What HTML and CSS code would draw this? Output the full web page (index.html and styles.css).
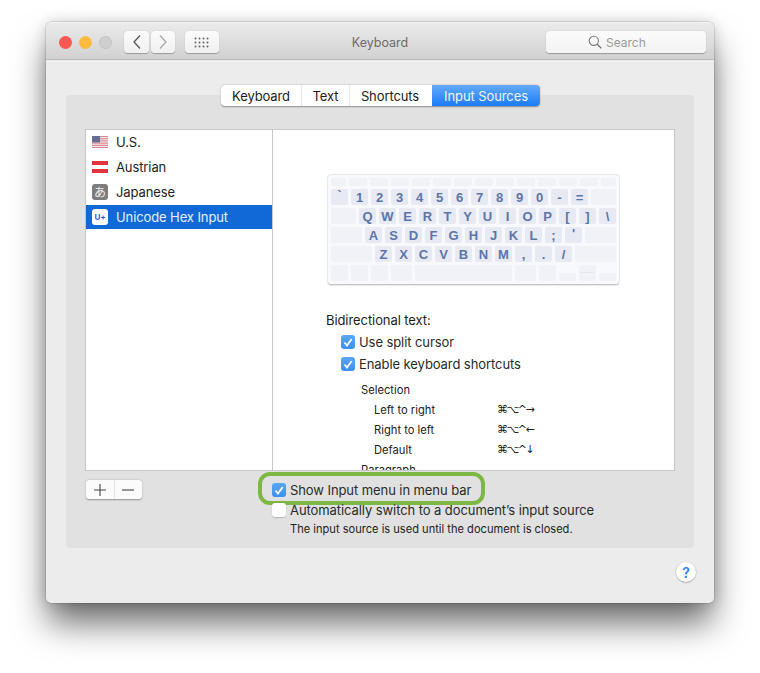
FILE: index.html
```html
<!DOCTYPE html>
<html lang="en">
<head>
<meta charset="utf-8">
<title>Keyboard</title>
<link rel="stylesheet" href="styles.css">
</head>
<body>
<div class="window">
  <header class="titlebar">
    <div class="tb-left">
      <div class="lights"><span class="light red"></span><span class="light yellow"></span><span class="light grey"></span></div>
      <div class="nav">
        <span class="tb-btn nav-back"><svg width="10" height="16" viewBox="0 0 10 16"><path d="M8 1.500 2 8l6 6.500" fill="none" stroke="#555" stroke-width="1.300"/></svg></span>
        <span class="tb-btn nav-fwd"><svg width="10" height="16" viewBox="0 0 10 16"><path d="M2 1.500 8 8l-6 6.500" fill="none" stroke="#aaa" stroke-width="1.300"/></svg></span>
      </div>
      <span class="tb-btn grid-btn"><svg width="16" height="11" viewBox="0 0 16 11" fill="#666"><circle cx="1.500" cy="1.500" r="1"/><circle cx="5.500" cy="1.500" r="1"/><circle cx="9.500" cy="1.500" r="1"/><circle cx="13.500" cy="1.500" r="1"/><circle cx="1.500" cy="5.500" r="1"/><circle cx="5.500" cy="5.500" r="1"/><circle cx="9.500" cy="5.500" r="1"/><circle cx="13.500" cy="5.500" r="1"/><circle cx="1.500" cy="9.500" r="1"/><circle cx="5.500" cy="9.500" r="1"/><circle cx="9.500" cy="9.500" r="1"/><circle cx="13.500" cy="9.500" r="1"/></svg></span>
    </div>
    <div class="title">Keyboard</div>
    <div class="tb-right">
      <div class="search"><svg width="14" height="14" viewBox="0 0 14 14"><circle cx="5.800" cy="5.800" r="4.600" fill="none" stroke="#777" stroke-width="1.100"/><path d="m9.200 9.200 4 4" stroke="#777" stroke-width="1.300"/></svg><span>Search</span></div>
    </div>
  </header>

  <main class="content">
    <nav class="tabs">
      <span class="tab tab-keyboard">Keyboard</span>
      <span class="tab tab-text">Text</span>
      <span class="tab tab-shortcuts">Shortcuts</span>
      <span class="tab tab-input">Input Sources</span>
    </nav>

    <section class="panel">
      <div class="box">
        <ul class="sources">
          <li class="source">
            <svg class="src-icon" width="16" height="12" viewBox="0 0 16 12"><rect width="16" height="12" fill="#f3f1f3"/><path d="M0 .5h16M0 2.400h16M0 4.200h16M0 6h16M0 7.800h16M0 9.600h16M0 11.500h16" stroke="#d98088" stroke-width=".95"/><rect width="8" height="6.500" fill="#666e94"/></svg>
            <span>U.S.</span>
          </li>
          <li class="source">
            <svg class="src-icon" width="16" height="12" viewBox="0 0 16 12"><rect width="16" height="12" fill="#fff"/><rect width="16" height="4" fill="#e2343f"/><rect y="8" width="16" height="4" fill="#e2343f"/></svg>
            <span>Austrian</span>
          </li>
          <li class="source">
            <span class="src-badge badge-ja">あ</span>
            <span>Japanese</span>
          </li>
          <li class="source selected">
            <span class="src-badge badge-hex">U+</span>
            <span>Unicode Hex Input</span>
          </li>
        </ul>
        <div class="detail">
          <div class="kbd">
            <div class="kr kr-fn"><i class="b w15"></i><i class="b w18"></i><i class="b w18"></i><i class="b w18"></i><i class="b w18"></i><i class="b w18"></i><i class="b w18"></i><i class="b w18"></i><i class="b w18"></i><i class="b w18"></i><i class="b w18"></i><i class="b w18"></i><i class="b w18"></i><i class="b w15"></i></div>
            <div class="kr"><b class="k top">`</b><b class="k">1</b><b class="k">2</b><b class="k">3</b><b class="k">4</b><b class="k">5</b><b class="k">6</b><b class="k">7</b><b class="k">8</b><b class="k">9</b><b class="k">0</b><b class="k">-</b><b class="k">=</b><i class="b w25"></i></div>
            <div class="kr"><i class="b w25"></i><b class="k">Q</b><b class="k">W</b><b class="k">E</b><b class="k">R</b><b class="k">T</b><b class="k">Y</b><b class="k">U</b><b class="k">I</b><b class="k">O</b><b class="k">P</b><b class="k">[</b><b class="k">]</b><b class="k">\</b></div>
            <div class="kr"><i class="b w31"></i><b class="k">A</b><b class="k">S</b><b class="k">D</b><b class="k">F</b><b class="k">G</b><b class="k">H</b><b class="k">J</b><b class="k">K</b><b class="k">L</b><b class="k">;</b><b class="k top">'</b><i class="b grow"></i></div>
            <div class="kr"><i class="b w41"></i><b class="k">Z</b><b class="k">X</b><b class="k">C</b><b class="k">V</b><b class="k">B</b><b class="k">N</b><b class="k">M</b><b class="k">,</b><b class="k">.</b><b class="k">/</b><i class="b grow"></i></div>
            <div class="kr"><i class="b w17"></i><i class="b w17"></i><i class="b w17"></i><i class="b w21"></i><i class="b w97"></i><i class="b w21"></i><i class="b w17"></i><i class="b w17 half-low"></i><span class="updown"><i class="b half"></i><i class="b half"></i></span><i class="b w17 half-low"></i></div>
          </div>

          <h2 class="bidi-title">Bidirectional text:</h2>
          <div class="check-row">
            <span class="cb on"><svg width="10" height="9" viewBox="0 0 10 9"><path d="M1.500 4.500 4 7.500 8.700 1" fill="none" stroke="#fff" stroke-width="1.800"/></svg></span>
            <span>Use split cursor</span>
          </div>
          <div class="check-row">
            <span class="cb on"><svg width="10" height="9" viewBox="0 0 10 9"><path d="M1.500 4.500 4 7.500 8.700 1" fill="none" stroke="#fff" stroke-width="1.800"/></svg></span>
            <span>Enable keyboard shortcuts</span>
          </div>
          <div class="sc-head">Selection</div>
          <div class="sc-row"><span>Left to right</span><span class="sc-keys">⌘⌥^→</span></div>
          <div class="sc-row"><span>Right to left</span><span class="sc-keys">⌘⌥^←</span></div>
          <div class="sc-row"><span>Default</span><span class="sc-keys">⌘⌥^↓</span></div>
          <div class="sc-head sc-para">Paragraph</div>
        </div>
      </div>

      <div class="under">
        <div class="plusminus">
          <span class="pm pm-plus"><svg width="12" height="12" viewBox="0 0 12 12"><path d="M6 0v12M0 6h12" stroke="#444" stroke-width="1.100"/></svg></span>
          <span class="pm"><svg width="12" height="12" viewBox="0 0 12 12"><path d="M0 6h12" stroke="#444" stroke-width="1.100"/></svg></span>
        </div>
        <div class="options">
          <div class="opt-row">
            <span class="cb on"><svg width="10" height="9" viewBox="0 0 10 9"><path d="M1.500 4.500 4 7.500 8.700 1" fill="none" stroke="#fff" stroke-width="1.800"/></svg></span>
            <span>Show Input menu in menu bar</span>
            <span class="ring"></span>
          </div>
          <div class="opt-row">
            <span class="cb off"></span>
            <span>Automatically switch to a document’s input source</span>
          </div>
          <p class="opt-note">The input source is used until the document is closed.</p>
        </div>
      </div>
    </section>

    <div class="help-row"><span class="help">?</span></div>
  </main>
</div>
</body>
</html>
```
FILE: styles.css
```css
* { box-sizing: border-box; }
html, body { margin: 0; height: 100%; background: #fff; }
body {
  padding: 22px 46px 0;
  font-family: Inter, "Liberation Sans", sans-serif;
  color: #222;
  overflow: hidden;
}
.window {
  width: 668px;
  height: 581px;
  border-radius: 5px;
  background: #ececec;
  box-shadow: 0 22px 34px -2px rgba(0, 0, 0, .58), 0 0 14px rgba(0, 0, 0, .16), 0 0 0 .5px rgba(0, 0, 0, .2);
  overflow: hidden;
  display: flex;
  flex-direction: column;
}
.titlebar {
  height: 38px;
  padding: 8px;
  display: grid;
  grid-template-columns: 1fr auto 1fr;
  align-items: center;
  background: linear-gradient(#ebebeb, #d1d1d1);
  border-bottom: 1px solid #bababa;
  border-top: 1px solid #f3f3f3;
}
.tb-left { display: flex; align-items: center; padding-left: 5px; }
.lights { display: flex; gap: 7px; margin-right: 12px; }
.light { width: 13px; height: 13px; border-radius: 50%; }
.red { background: #fc5753; }
.yellow { background: #fdbc40; }
.grey { background: #cfcfcf; border: 1px solid #c2c2c2; }
.nav { display: flex; gap: 2px; margin-right: 10px; }
.tb-btn {
  height: 22px;
  display: flex;
  align-items: center;
  justify-content: center;
  background: linear-gradient(#fbfbfb, #f0f0f0);
  border-radius: 4px;
  box-shadow: 0 .5px 1px rgba(0, 0, 0, .28);
}
.nav-back { width: 25px; }
.nav-fwd { width: 24px; }
.grid-btn { width: 34px; }
.title { font-size: 12.500px; color: #6c6c6c; }
.tb-right { display: flex; justify-content: flex-end; }
.search {
  width: 160px;
  height: 22px;
  display: flex;
  align-items: center;
  gap: 4px;
  padding-left: 42px;
  background: linear-gradient(#fbfbfb, #f3f3f3);
  border-radius: 4px;
  box-shadow: 0 .5px 1px rgba(0, 0, 0, .28);
  font-size: 12px;
  color: #9a9a9a;
}

.content { flex: 1; padding: 25px 20px 0; display: flex; flex-direction: column; }
.tabs {
  position: relative;
  z-index: 1;
  align-self: center;
  display: flex;
  height: 21px;
  margin-bottom: -11px;
  margin-left: 1px;
  border-radius: 4px;
  background: #fff;
  box-shadow: 0 .5px 1.500px rgba(0, 0, 0, .38);
  font-size: 13px;
  letter-spacing: -.1px;
  color: #1c1c1c;
}
.tab {
  display: flex;
  align-items: center;
  justify-content: center;
  border-right: 1px solid #e6e6e6;
}
.tab-keyboard { width: 81px; }
.tab-text { width: 48px; }
.tab-shortcuts { width: 82px; border-right: 0; padding-right: 2px; }
.tab-input {
  width: 108px;
  border-right: 0;
  color: #eef5ff;
  background: linear-gradient(#64abfb, #1a7bf5);
  border-radius: 0 4px 4px 0;
}
.panel {
  height: 453px;
  width: 628px;
  border-radius: 4px;
  background: #e1e1e1;
  padding: 34px 19px 0 19px;
}
.box {
  display: flex;
  height: 342px;
  background: #fff;
  border: 1px solid #c6c6c6;
}
.sources {
  width: 187px;
  flex: none;
  margin: 0;
  padding: 0;
  list-style: none;
  border-right: 1px solid #c6c6c6;
  font-size: 13px;
  letter-spacing: -.1px;
  color: #1e1e1e;
}
.source {
  height: 25px;
  padding: 0 0 2px 6px;
  display: flex;
  align-items: center;
  gap: 8px;
}
.source.selected { height: 24px; padding-bottom: 0; background: #1069d7; color: #e8f1fd; }
.src-icon { flex: none; }
.src-badge {
  width: 16px;
  height: 16px;
  flex: none;
  display: flex;
  align-items: center;
  justify-content: center;
  border-radius: 3px;
}
.badge-ja { background: #7d7d7d; color: #eee; font: 12px "Noto Sans CJK JP", sans-serif; }
.badge-hex { background: #fff; color: #1069d7; font-size: 8px; font-weight: 700; }

.detail { flex: 1; min-width: 0; padding: 45px 0 0 55px; overflow: hidden; }
.kbd {
  width: 291px;
  height: 109px;
  padding: 3px;
  display: flex;
  flex-direction: column;
  gap: 3px;
  border-radius: 3px;
  background: #f8f9fc;
  box-shadow: 0 .5px 2px rgba(0, 0, 0, .32);
}
.kr { display: flex; gap: 3px; height: 16px; }
.kr-fn { height: 8px; }
.b { display: block; height: 100%; border-radius: 2px; background: #f0f2f7; }
.k {
  width: 17px;
  height: 16px;
  display: flex;
  align-items: center;
  justify-content: center;
  border-radius: 2px;
  background: #e7eaf2;
  color: #5b74aa;
  font: 700 13px/1 "Liberation Sans", sans-serif;
}
.k.top { align-items: flex-start; }
.w15 { width: 15px; }
.w17 { width: 17px; }
.w18 { width: 18px; }
.w21 { width: 21px; }
.w25 { width: 25px; }
.w31 { width: 31px; }
.w41 { width: 41px; }
.w97 { width: 97px; }
.grow { flex: 1; }
.half-low { height: 8px; margin-top: 8px; }
.updown { width: 17px; display: flex; flex-direction: column; }
.half { height: 8px; }
.updown .half:first-child { border-bottom: 1px solid #e6e8ee; }

.bidi-title { margin: 28px 0 0 -2px; font-size: 13px; letter-spacing: -.08px; font-weight: 400; line-height: 16px; color: #1e1e1e; }
.check-row {
  height: 22px;
  margin-top: 3px;
  margin-left: 13px;
  display: flex;
  align-items: center;
  gap: 4px;
  font-size: 13px;
  letter-spacing: -.08px;
  color: #2a2a2a;
}
.check-row + .check-row { margin-top: 0; }
.cb {
  width: 14px;
  height: 14px;
  flex: none;
  display: flex;
  align-items: center;
  justify-content: center;
  border-radius: 3px;
}
.cb.on { background: linear-gradient(#5aa6f8, #3b8ff2); }
.cb.off { background: #fff; box-shadow: 0 .5px 1px rgba(0, 0, 0, .2); }
.sc-head { margin: 5px 0 0 33px; font-size: 11.200px; line-height: 20px; color: #222; }
.sc-row {
  margin-left: 46px;
  display: grid;
  grid-template-columns: 123px auto;
  font-size: 11.200px;
  line-height: 20px;
  color: #222;
}
.sc-keys { font-family: "DejaVu Sans", sans-serif; font-size: 11px; letter-spacing: -1.500px; }
.sc-para { margin-top: 0; }

.under { display: flex; }
.plusminus {
  width: 56px;
  height: 19px;
  margin: 9px 0 0 1px;
  display: flex;
  border-radius: 3px;
  background: #fbfbfb;
  box-shadow: 0 .5px 1.500px rgba(0, 0, 0, .35);
}
.pm { flex: 1; display: flex; align-items: center; justify-content: center; }
.pm-plus { border-right: 1px solid #e3e3e3; }
.options { margin: 9px 0 0 130px; font-size: 13px; letter-spacing: -.08px; color: #2a2a2a; }
.opt-row {
  position: relative;
  height: 20px;
  display: flex;
  align-items: center;
  gap: 4px;
}
.ring {
  position: absolute;
  left: -14px;
  top: -8px;
  width: 227px;
  height: 33px;
  border: 4px solid #7cb843;
  border-radius: 12px;
  pointer-events: none;
}
.opt-note { margin: 0 0 0 18px; font-size: 11.100px; letter-spacing: 0; line-height: 18px; color: #222; }
.help-row { display: flex; justify-content: flex-end; padding: 14px 0 0 0; }
.help {
  width: 20px;
  height: 20px;
  margin-right: -2px;
  display: flex;
  align-items: center;
  justify-content: center;
  border-radius: 50%;
  background: #fff;
  box-shadow: 0 .5px 1.500px rgba(0, 0, 0, .4);
  color: #2b86f5;
  font-size: 14px;
  font-weight: 600;
}
```
